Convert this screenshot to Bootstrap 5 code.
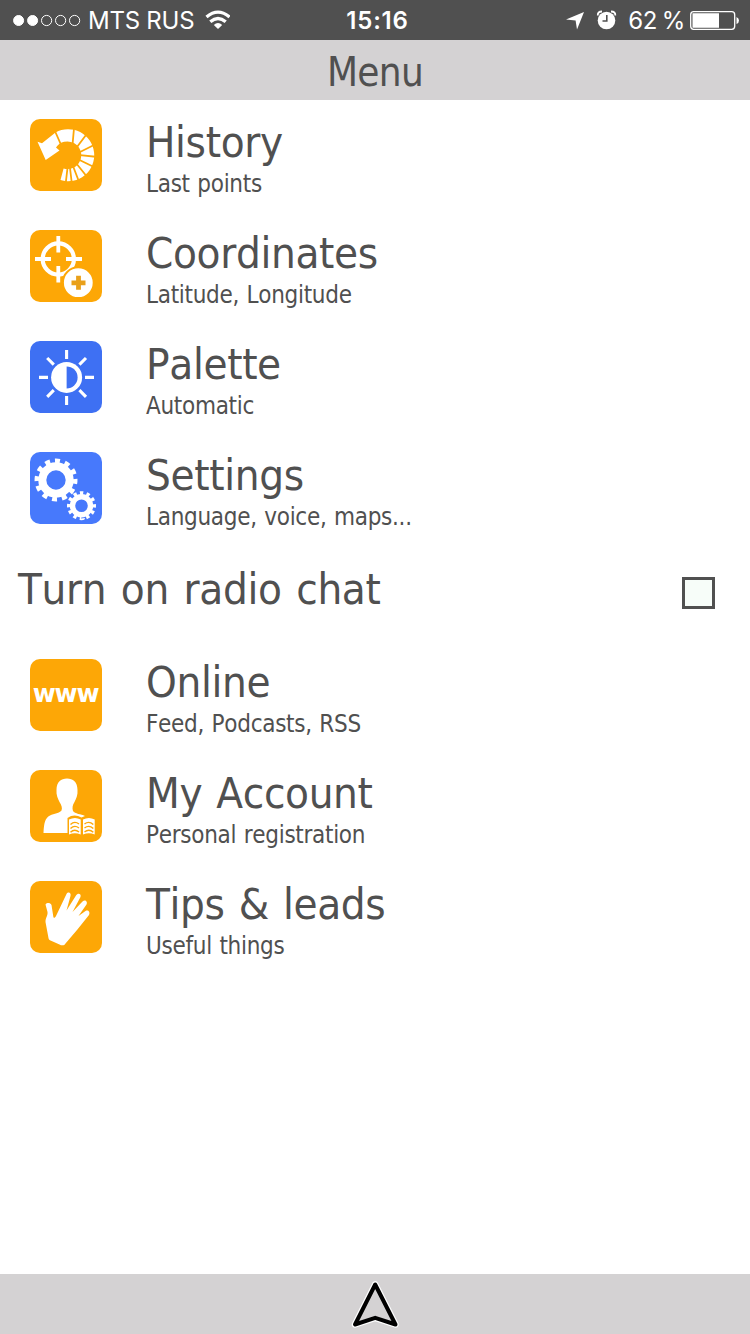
<!DOCTYPE html>
<html lang="en">
<head>
<meta charset="utf-8">
<meta name="viewport" content="width=device-width, initial-scale=1">
<title>Menu</title>
<link rel="stylesheet" href="https://cdn.jsdelivr.net/npm/bootstrap@5.3.0/dist/css/bootstrap.min.css">
<style>
  body { font-family: "DejaVu Sans Condensed", "DejaVu Sans", sans-serif; font-stretch: condensed; font-kerning: none; color: #505050; background: #fff; }
  .screen { width: 750px; height: 1334px; overflow: hidden; }
  .status { height: 40px; background: #505050; color: #fff; font: 24px/40px Inter, sans-serif; }
  .status > div { width: 250px; }
  .status span { padding-top: 2px; }
  .status .carrier { margin-left: 4px; letter-spacing: -.25px; }
  .status .clock { padding: 1px 0 0 5px; letter-spacing: .8px; }
  .status .charge { margin: 0 3px 0 9.5px; letter-spacing: -.4px; word-spacing: -1.5px; }
  .titlebar { height: 60px; background: #d4d2d3; font-size: 40px; line-height: 64px; letter-spacing: -.7px; }
  .entry { height: 111px; padding: 19px 30px 0; gap: 44px; }
  .entry svg { width: 72px; height: 72px; }
  .entry-name { font-size: 43.5px; line-height: 50px; margin-top: -2px; letter-spacing: -.35px; word-spacing: 2px; white-space: nowrap; }
  .entry-note { font-size: 24px; line-height: 28px; margin-top: 3px; letter-spacing: -.3px; word-spacing: 1px; white-space: nowrap; }
  .radio-row { height: 96px; padding: 22px 35px 0 18px; }
  .radio-row .entry-name { word-spacing: 2.6px; }
  .tick { width: 33px; height: 32px; margin-top: 11px; border: 3px solid #505050; border-radius: 0; background: #f7fdf9; appearance: none; }
  .bottombar { height: 60px; background: #d4d2d3; }
  .www-tile { width: 72px; height: 72px; border-radius: 10px; background: #fda706; color: #fff; font: 700 25px/69px "DejaVu Sans", sans-serif; font-stretch: normal; letter-spacing: -1.2px; text-indent: -1px; }
</style>
</head>
<body>
<div class="screen d-flex flex-column">
  <header class="status d-flex flex-shrink-0">
    <div class="d-flex align-items-center">
      <svg width="84" height="40" viewBox="0 0 84 40" class="flex-shrink-0"><g fill="#fff" stroke="#fff"><circle cx="18.600" cy="20.500" r="5"/><circle cx="32.600" cy="20.500" r="5"/><g fill="none"><circle cx="46.600" cy="20.500" r="5.100"/><circle cx="60.600" cy="20.500" r="5.100"/><circle cx="74.600" cy="20.500" r="5.100"/></g></g></svg>
      <span class="carrier text-nowrap">MTS RUS</span>
      <svg width="36" height="40" viewBox="-11.500 -10.300 36 40" class="flex-shrink-0"><g fill="none" stroke="#fff" stroke-width="3.300"><path d="M1 6.700Q12.500-3 24 6.700M4.800 11.500Q12.500 5 20.200 11.500"/></g><path d="M8.300 14.600Q12.500 11 16.700 14.600L12.500 18.700Z" fill="#fff"/></svg>
    </div>
    <div class="clock text-center fw-semibold">15:16</div>
    <div class="d-flex align-items-center justify-content-end">
      <svg width="54" height="40" viewBox="565 0 54 40" class="flex-shrink-0"><path d="M584 12L577 29.500L575.600 20.500L566 19.500Z" fill="#fff"/><circle cx="606.500" cy="20.500" r="8.800" fill="#fff"/><path d="M606.800 15V21H602.500" stroke="#505050" stroke-width="1.600" fill="none"/><path d="M597.800 15.500Q597.500 11.500 602 11.500M611 11.500Q615.600 11.500 615.300 15.500" stroke="#fff" stroke-width="1.800" fill="none"/></svg>
      <span class="charge text-nowrap">62 %</span>
      <svg width="62" height="40" viewBox="688 0 62 40" class="flex-shrink-0"><rect x="690.700" y="11.700" width="44" height="17.600" rx="3" fill="none" stroke="#fff" stroke-width="1.300"/><path d="M692.500 13.300H719V27.700H692.500ZM736.500 17Q739 18 739 20.500T736.500 24Z" fill="#fff"/></svg>
    </div>
  </header>
  <h1 class="titlebar text-center fw-normal mb-0 flex-shrink-0">Menu</h1>

  <main class="flex-grow-1">
    <section class="entry d-flex">
      <svg viewBox="0 0 72 72"><rect width="72" height="72" rx="10" fill="#fda706"/><path d="M25.500 13.500A26 26 0 1 1 30.500 61L33.600 49.500A13.800 13.800 0 1 0 26 28.500L29.500 31.500L15.700 41L7.500 22.700L12 24.200Z" fill="#fff"/><path d="M24.500 11L32 28M44.300 6L42.500 26M57.500 14L47 28M66 25L49 33.500M68 38L50 36.200M66 49L48.500 40.500M58 59L46 44M49.500 64L43 47M42 66L40 49M35.500 66L37.500 49" stroke="#fda706" stroke-width="1.800"/></svg>
      <div><div class="entry-name">History</div><div class="entry-note">Last points</div></div>
    </section>
    <section class="entry d-flex">
      <svg viewBox="0 0 72 72"><rect width="72" height="72" rx="10" fill="#fda706"/><circle cx="28.300" cy="29" r="15.600" fill="none" stroke="#fff" stroke-width="4.200"/><path d="M28.300 6V22.500M28.300 36V52.500M5 29H21M36 29H52" stroke="#fff" stroke-width="3.800"/><circle cx="48.300" cy="52.700" r="15.400" fill="#fff" stroke="#fda706" stroke-width="2"/><path d="M48.500 45.800V59.800M41.500 52.800H55.500" stroke="#e9a01a" stroke-width="4.800"/></svg>
      <div><div class="entry-name">Coordinates</div><div class="entry-note">Latitude, Longitude</div></div>
    </section>
    <section class="entry d-flex">
      <svg viewBox="0 0 72 72"><rect width="72" height="72" rx="10" fill="#3e70f3"/><circle cx="36.600" cy="36.400" r="15.500" fill="#fff"/><path d="M36.600 25.400A11 11 0 0 1 36.600 47.400Z" fill="#3e70f3"/><path d="M36.600 9V18M36.600 55V64M9 36.400H18M55 36.400H64M17.200 17L23.800 23.600M56 17L49.400 23.600M17.200 55.800L23.800 49.200M56 55.800L49.400 49.200" stroke="#fff" stroke-width="3.100"/></svg>
      <div><div class="entry-name">Palette</div><div class="entry-note">Automatic</div></div>
    </section>
    <section class="entry d-flex">
      <svg viewBox="0 0 72 72"><rect width="72" height="72" rx="10" fill="#4779fc"/><g fill="none" stroke="#fff"><circle cx="26" cy="28" r="13.700" stroke-width="8"/><circle cx="26" cy="28" r="19" stroke-width="5" pathLength="120" stroke-dasharray="5 5" transform="rotate(-3 26 28)"/><circle cx="51.500" cy="53.700" r="9" stroke-width="5.400"/><circle cx="51.500" cy="53.700" r="12.600" stroke-width="3.800" pathLength="120" stroke-dasharray="5 5" transform="rotate(-7 51.500 53.700)"/></g></svg>
      <div><div class="entry-name">Settings</div><div class="entry-note">Language, voice, maps...</div></div>
    </section>

    <section class="radio-row d-flex justify-content-between">
      <label class="entry-name" for="radio">Turn on radio chat</label>
      <input type="checkbox" class="tick" id="radio">
    </section>

    <section class="entry d-flex">
      <div class="www-tile d-flex justify-content-center">www</div>
      <div><div class="entry-name">Online</div><div class="entry-note">Feed, Podcasts, RSS</div></div>
    </section>
    <section class="entry d-flex">
      <svg viewBox="0 0 72 72"><rect width="72" height="72" rx="10" fill="#fda706"/><path d="M13.500 63C14 53 15 48 20 45.500C24 43.500 30 43 31.500 40.500C32.500 38 31.500 35 29.500 32C28 29 26 25 26.500 20C26.500 12 31 8.500 37 8.500S47.500 12 47.500 20C48 25 46 29 44.500 32C42.500 35 42 38 43 41C45 44 51 44 55 46V63Z" fill="#fff"/><path d="M37.500 64V48Q44 43.500 51.500 47.500Q59 43.500 66 48V64Z" fill="#fda706"/><path d="M39 49.500Q45 46.500 50.700 49.500V64.500Q45 62 39 64.500ZM53 49.500Q59 46.500 64.700 49.500V64.500Q59 62 53 64.500Z" fill="#fff"/><path d="M40.500 54.500Q44.500 50.500 49 54M40.500 58.500Q44.500 54.500 49 58M40.500 62.300Q44.500 58.500 49 62M54.500 54Q59 50.500 63.300 54.500M54.500 58Q59 54.500 63.300 58.500M54.500 62Q59 58.500 63.300 62.300" fill="none" stroke="#fda706" stroke-width="1.400"/></svg>
      <div><div class="entry-name">My Account</div><div class="entry-note">Personal registration</div></div>
    </section>
    <section class="entry d-flex">
      <svg viewBox="0 0 72 72"><rect width="72" height="72" rx="10" fill="#fda706"/><path d="M15.500 23.500C17 21.500 20 21.500 21.500 24L23.300 35.500C23.500 37.500 25 37 26 35L36.500 13C38 10.500 41.500 11.500 40.500 15L36.500 29.500L46 14.500C48 11.500 51.500 13 50.500 16L42.500 31L52.500 20.500C55 18 58 20.500 56.500 23.500L48.500 35L55.500 30C58 28.500 60.500 31 59 34L47 49L35.500 62.500C34.500 64.500 32 65 29.500 63.500L20.500 59.500C19 59 18.500 58 18.300 56L15.500 41C15.500 36 18 35 17.500 31Z" fill="#fff"/></svg>
      <div><div class="entry-name">Tips &amp; leads</div><div class="entry-note">Useful things</div></div>
    </section>
  </main>

  <footer class="bottombar d-flex justify-content-center flex-shrink-0">
    <svg width="60" height="60" viewBox="0 0 60 60"><path d="M30.200 10.500L10 50.500L30.200 43.800L50.500 50.500Z" fill="none" stroke="#fff" stroke-width="6.500" stroke-linejoin="round"/><path d="M30.200 10.500L10 50.500L30.200 43.800L50.500 50.500Z" fill="#d4d2d3" stroke="#000" stroke-width="4" stroke-linejoin="round"/></svg>
  </footer>
</div>
<script src="https://cdn.jsdelivr.net/npm/bootstrap@5.3.0/dist/js/bootstrap.bundle.min.js"></script>
</body>
</html>
